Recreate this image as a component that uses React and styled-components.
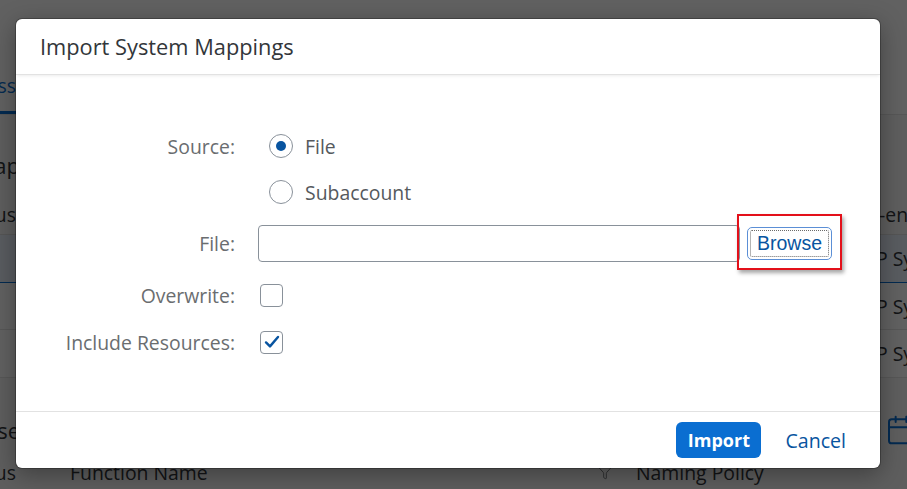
import React from 'react';
import styled, { createGlobalStyle } from 'styled-components';
import { Calendar, Filter } from 'lucide-react';

const GlobalStyle = createGlobalStyle`
  html, body { margin: 0; padding: 0; }
  body {
    font-family: "Open Sans", "Liberation Sans", Arial, sans-serif;
    overflow: hidden;
  }
`;

const Screen = styled.div`
  position: relative;
  width: 907px;
  height: 489px;
  overflow: hidden;
  background: #f7f7f7;
`;

/* ---------- background application (under the block layer) ---------- */

const Page = styled.div`
  display: flex;
  flex-direction: column;
  width: 100%;
  color: #32363a;
  font-size: 19.4px;
`;

const BgRow = styled.div`
  display: flex;
  align-items: center;
  justify-content: space-between;
  height: ${(p) => p.$h}px;
  padding-top: ${(p) => p.$pt || 0}px;
  background: ${(p) => p.$bg || '#fff'};
  border-bottom: ${(p) => (p.$line ? `1px solid ${p.$line}` : 'none')};
  box-sizing: border-box;
  flex: none;
`;

const LeftCell = styled.div`
  width: ${(p) => p.$w || 16}px;
  height: 100%;
  display: flex;
  align-items: center;
  justify-content: flex-end;
  white-space: nowrap;
  font-size: ${(p) => p.$fs || 19.4}px;
  color: ${(p) => p.$color || '#32363a'};
  box-sizing: border-box;
  border-bottom: ${(p) => (p.$underline ? `3px solid ${p.$underline}` : 'none')};
  flex: none;
`;

const RightCell = styled.div`
  width: 31px;
  padding-left: ${(p) => p.$pl || 0}px;
  box-sizing: border-box;
  display: flex;
  align-items: center;
  white-space: nowrap;
  overflow: hidden;
  color: ${(p) => p.$color || '#32363a'};
  flex: none;
`;

const HeaderCell = styled.div`
  width: ${(p) => p.$w}px;
  padding-left: ${(p) => p.$pl || 0}px;
  box-sizing: border-box;
  display: flex;
  align-items: center;
  white-space: nowrap;
  color: #32363a;
  flex: none;
`;

const BlockLayer = styled.div`
  position: absolute;
  inset: 0;
  background: rgba(0, 0, 0, 0.62);
`;

/* ---------- dialog ---------- */

const Dialog = styled.div`
  position: absolute;
  left: 16px;
  top: 19px;
  width: 864px;
  height: 449px;
  background: #fff;
  border-radius: 6px;
  box-shadow: 0 0 0 1px rgba(0, 0, 0, 0.25), 0 6px 24px rgba(0, 0, 0, 0.35);
  display: flex;
  flex-direction: column;
  overflow: hidden;
`;

const Header = styled.header`
  height: 56px;
  flex: none;
  display: flex;
  align-items: center;
  padding: 0 24px;
  box-sizing: border-box;
  border-bottom: 1px solid #e2e2e2;
  box-shadow: 0 2px 3px -1px rgba(0, 0, 0, 0.08);
`;

const Title = styled.h1`
  margin: 0;
  font-size: 21.8px;
  font-weight: 400;
  color: #32363a;
`;

const Content = styled.div`
  flex: 1;
  padding-top: 48px;
  display: flex;
  flex-direction: column;
`;

const Row = styled.div`
  display: grid;
  grid-template-columns: 219px 1fr;
  column-gap: 23px;
  align-items: center;
  height: ${(p) => p.$h}px;
`;

const Label = styled.span`
  text-align: right;
  color: #6a6d70;
  font-size: 19.4px;
`;

const RadioOption = styled.label`
  display: flex;
  align-items: center;
  gap: 12px;
  padding-left: 11px;
  color: #55595d;
  font-size: 19.4px;
`;

const RadioCircle = styled.span`
  width: 24px;
  height: 24px;
  border-radius: 50%;
  border: 1px solid #89919a;
  box-sizing: border-box;
  display: flex;
  align-items: center;
  justify-content: center;
  background: #fff;
  &::after {
    content: '';
    width: 10px;
    height: 10px;
    border-radius: 50%;
    background: ${(p) => (p.$checked ? '#0854a0' : 'transparent')};
  }
`;

const FileLine = styled.div`
  display: flex;
  align-items: center;
  gap: 7px;
`;

const FileInput = styled.div`
  width: 482px;
  height: 37px;
  border: 1px solid #89919a;
  border-radius: 4px;
  box-sizing: border-box;
  background: #fff;
`;

const BrowseWrap = styled.div`
  position: relative;
  display: flex;
  &::after {
    content: '';
    position: absolute;
    left: -10px;
    top: -13px;
    right: -10px;
    bottom: -10px;
    border: 2px solid #e3101a;
    box-shadow: 2px 3px 4px rgba(0, 0, 0, 0.35);
    pointer-events: none;
  }
`;

const BrowseButton = styled.button`
  width: 85px;
  height: 33px;
  padding: 0;
  border: 1px solid #5b8fd6;
  border-radius: 5px;
  background: #fff;
  color: #0854a0;
  font-family: "Liberation Sans", Arial, sans-serif;
  font-size: 19.5px;
  outline: 1px dotted #6b6b6b;
  outline-offset: -4px;
  cursor: pointer;
`;

const CheckBox = styled.span`
  width: 23px;
  height: 23px;
  margin-left: 2px;
  border: 1px solid #89919a;
  border-radius: 4px;
  box-sizing: border-box;
  display: flex;
  align-items: center;
  justify-content: center;
  background: #fff;
`;

const Footer = styled.footer`
  height: 57px;
  flex: none;
  border-top: 1px solid #e2e2e2;
  box-sizing: border-box;
  display: flex;
  align-items: center;
  justify-content: flex-end;
  gap: 14px;
  padding-right: 24px;
`;

const FooterButton = styled.button`
  height: 36px;
  padding: 0 ${(p) => (p.$primary ? 0 : 10)}px;
  width: ${(p) => (p.$primary ? '85px' : 'auto')};
  border: none;
  border-radius: 6px;
  background: ${(p) => (p.$primary ? '#0a6ed1' : 'transparent')};
  color: ${(p) => (p.$primary ? '#fff' : '#0854a0')};
  font-family: "Open Sans", "Liberation Sans", Arial, sans-serif;
  font-size: ${(p) => (p.$primary ? 18 : 19.6)}px;
  font-weight: ${(p) => (p.$primary ? 700 : 400)};
  cursor: pointer;
`;

const CalendarSlot = styled.span`
  display: flex;
  padding-left: 9px;
`;

function Check() {
  return (
    <svg width="16" height="14" viewBox="0 0 16 14" fill="none">
      <path d="M2 7.4 L6 11.4 L14 2" stroke="#0854a0" strokeWidth="2.4" strokeLinecap="round" strokeLinejoin="round" />
    </svg>
  );
}

export default function App() {
  return (
    <>
      <GlobalStyle />
      <Screen>
        <Page>
          <BgRow $h={60} />
          <BgRow $h={55} $line="#e5e5e5">
            <LeftCell $color="#0a6ed1" $underline="#0a6ed1">Class</LeftCell>
          </BgRow>
          <BgRow $h={80} $pt={20} $bg="#f7f7f7">
            <LeftCell $fs={22} $w={20}>Map</LeftCell>
          </BgRow>
          <BgRow $h={40} $bg="#f7f7f7" $line="#e0e0e0">
            <LeftCell>Status</LeftCell>
            <RightCell $pl={3}>-enabled</RightCell>
          </BgRow>
          <BgRow $h={48} $bg="#eaf2fb" $line="#0a6ed1">
            <LeftCell />
            <RightCell>P System</RightCell>
          </BgRow>
          <BgRow $h={47} $line="#e5e5e5">
            <LeftCell />
            <RightCell>P System</RightCell>
          </BgRow>
          <BgRow $h={48} $line="#e5e5e5">
            <LeftCell />
            <RightCell>P System</RightCell>
          </BgRow>
          <BgRow $h={77} $pt={26} $bg="#f7f7f7">
            <LeftCell $fs={22} $w={20}>Purpose</LeftCell>
            <RightCell $color="#0a6ed1">
              <CalendarSlot>
                <Calendar size={32} strokeWidth={1.5} />
              </CalendarSlot>
            </RightCell>
          </BgRow>
          <BgRow $h={34} $bg="#f7f7f7">
            <LeftCell>Status</LeftCell>
            <HeaderCell $w={581} $pl={54}>Function Name</HeaderCell>
            <HeaderCell $w={39}>
              <Filter size={16} strokeWidth={1.3} color="#6a6d70" />
            </HeaderCell>
            <HeaderCell $w={271}>Naming Policy</HeaderCell>
          </BgRow>
        </Page>

        <BlockLayer />

        <Dialog role="dialog" aria-label="Import System Mappings">
          <Header>
            <Title>Import System Mappings</Title>
          </Header>
          <Content>
            <Row $h={46}>
              <Label>Source:</Label>
              <RadioOption>
                <RadioCircle $checked />
                File
              </RadioOption>
            </Row>
            <Row $h={46}>
              <span />
              <RadioOption>
                <RadioCircle />
                Subaccount
              </RadioOption>
            </Row>
            <Row $h={57}>
              <Label>File:</Label>
              <FileLine>
                <FileInput />
                <BrowseWrap>
                  <BrowseButton>Browse</BrowseButton>
                </BrowseWrap>
              </FileLine>
            </Row>
            <Row $h={47}>
              <Label>Overwrite:</Label>
              <CheckBox />
            </Row>
            <Row $h={46}>
              <Label>Include Resources:</Label>
              <CheckBox>
                <Check />
              </CheckBox>
            </Row>
          </Content>
          <Footer>
            <FooterButton $primary>Import</FooterButton>
            <FooterButton>Cancel</FooterButton>
          </Footer>
        </Dialog>
      </Screen>
    </>
  );
}
